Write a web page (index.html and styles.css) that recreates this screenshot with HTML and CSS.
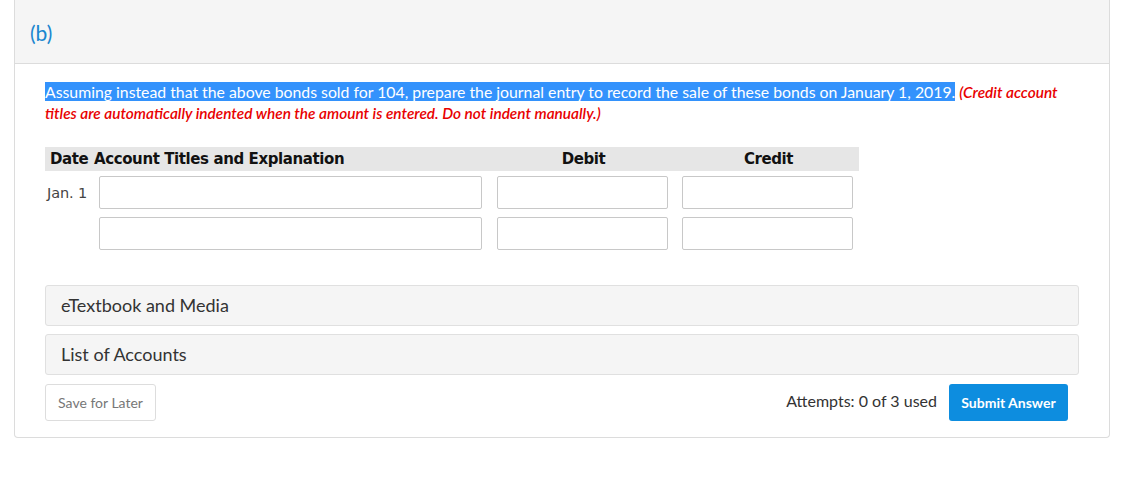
FILE: index.html
```html
<!DOCTYPE html>
<html>
<head>
<meta charset="utf-8">
<link rel="stylesheet" href="styles.css">
</head>
<body>
<div class="card">
  <div class="card-head">(b)</div>
  <div class="card-body">
    <p class="question"><span class="sel">Assuming instead that the above bonds sold for 104, prepare the journal entry to record the sale of these bonds on January 1, 2019.</span> <em class="note">(Credit account titles are automatically indented when the amount is entered. Do not indent manually.)</em></p>
    <div class="journal">
      <div class="jhead">
        <span class="h-date">Date</span>
        <span class="h-acct">Account Titles and Explanation</span>
        <span class="c-amt">Debit</span>
        <span class="c-amt">Credit</span>
      </div>
      <div class="jrow">
        <span class="c-date">Jan. 1</span>
        <span class="c-acct"><input class="in"></span>
        <span class="c-amt"><input class="in"></span>
        <span class="c-amt"><input class="in"></span>
      </div>
      <div class="jrow">
        <span class="c-date"></span>
        <span class="c-acct"><input class="in"></span>
        <span class="c-amt"><input class="in"></span>
        <span class="c-amt"><input class="in"></span>
      </div>
    </div>
    <div class="acc first">eTextbook and Media</div>
    <div class="acc">List of Accounts</div>
    <div class="actions">
      <button class="btn-save">Save for Later</button>
      <div class="right">
        <span class="attempts">Attempts: 0 of 3 used</span>
        <button class="btn-submit">Submit Answer</button>
      </div>
    </div>
  </div>
</div>
</body>
</html>
```
FILE: styles.css
```css
html, body { margin: 0; padding: 0; background: #fff; }
body { font-family: Lato, "Open Sans", sans-serif; color: #333; }
.card {
  margin: 0 0 0 14px;
  width: 1094px;
  border: 1px solid #dcdcdc;
  border-top: none;
  border-radius: 0 0 4px 4px;
}
.card-head {
  background: #f5f5f5;
  border-bottom: 1px solid #dcdcdc;
  height: 64px;
  box-sizing: border-box;
  padding: 20px 0 0 15px;
  font-size: 21px;
  line-height: 25px;
  color: #1b87cf;
}
.card-body { padding: 17px 30px 16px 30px; }
.question {
  margin: 0;
  font-size: 15.8px;
  line-height: 21px;
  color: #333;
}
.sel { background: #3392fc; color: #fff; }
.note { color: #e80000; font-weight: 600; font-size: 15.4px; line-height: 1; }
.journal { margin-top: 24px; width: 814px; font-family: "DejaVu Sans", Verdana, sans-serif; }
.jhead {
  display: flex; align-items: center;
  background: #e6e6e6;
  height: 24px;
  font-weight: bold; color: #111;
  font-size: 15px;
  letter-spacing: -0.4px;
}
.h-date { width: 49px; padding-left: 5px; box-sizing: border-box; flex: none; }
.h-acct { width: 389px; flex: none; }
.jrow { display: flex; align-items: center; margin-top: 8px; height: 33px; }
.jhead + .jrow { margin-top: 5px; }
.c-date { width: 54px; padding-left: 2px; box-sizing: border-box; flex: none; color: #444; font-size: 14.5px; letter-spacing: -0.1px; }
.c-acct { width: 383px; flex: none; }
.c-amt { width: 171px; margin-left: 15px; flex: none; text-align: center; }
.c-amt:last-child { margin-left: 14px; }
.in {
  display: block; width: 100%; height: 33px; box-sizing: border-box;
  border: 1px solid #c8c8c8; border-radius: 2px; background: #fff; margin: 0; padding: 0;
}
.acc {
  margin-top: 8px;
  height: 41px; box-sizing: border-box;
  background: #f5f5f5;
  border: 1px solid #e0e0e0;
  border-radius: 3px;
  padding: 8px 15px 0;
  font-size: 18px; line-height: 22px; color: #333;
}
.acc.first { margin-top: 35px; }
.actions { display: flex; justify-content: space-between; align-items: center; margin-top: 9px; }
.btn-save {
  font-family: Lato, sans-serif; font-size: 14px; color: #777;
  background: #fff; border: 1px solid #ddd; border-radius: 3px;
  width: 111px; height: 37px; padding: 0;
}
.right { display: flex; align-items: center; gap: 12px; margin-right: 11px; }
.attempts { font-size: 16px; color: #333; position: relative; top: -2px; }
.btn-submit {
  font-family: Lato, sans-serif; font-size: 14px; font-weight: bold; color: #fff;
  background: #0d8ddf; border: none; border-radius: 3px;
  width: 119px; height: 37px; padding: 0;
}
```
